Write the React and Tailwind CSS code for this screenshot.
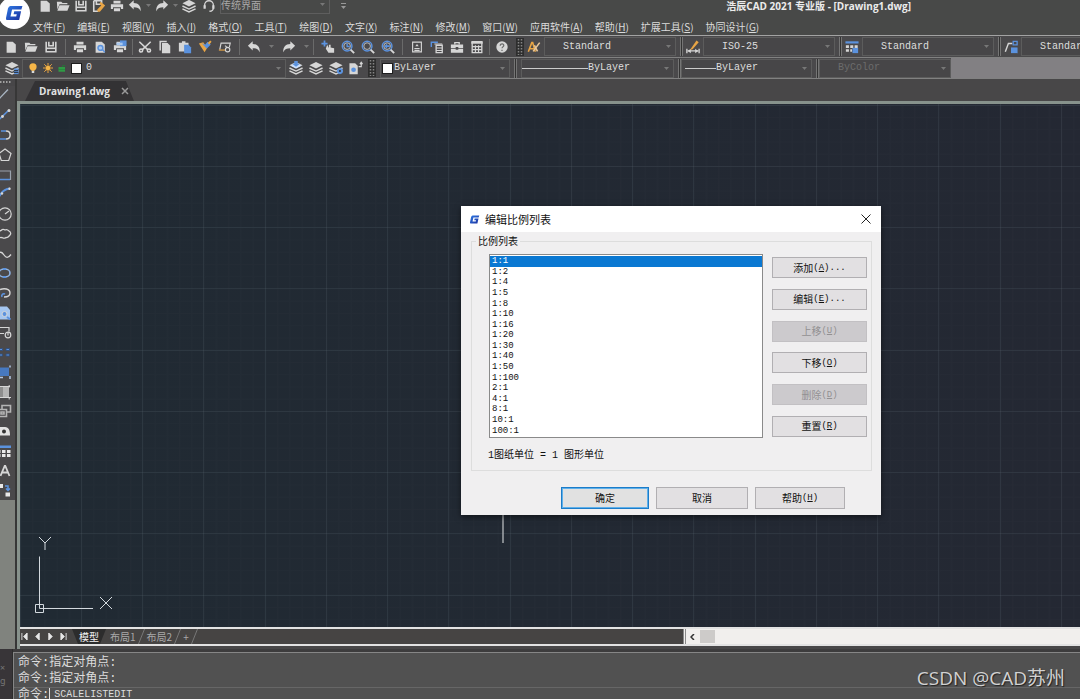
import React from "react";

const L = "#d6d6d6";
const B = "#5b92de";
const O = "#e8a545";

const page = <path d="M3 2h7l3.500 3v9.500H3z" fill={L} />;
const folder = (
  <g fill={L}>
    <path d="M1 3h5l1.500 1.500H13V6H4L1.500 12z" />
    <path d="M4 7H15.500l-2.500 6.500H1.500z" />
  </g>
);
const disk = (
  <g fill="none" stroke={L} strokeWidth="1.800">
    <path d="M2.500 2v11.500h11V2" />
    <path d="M5.500 2v4.500h5V2" />
    <path d="M2.500 9.500h11" />
  </g>
);
const printer = (
  <g fill={L}>
    <path d="M4 2h8v3H4zM1 6h14v5.500h-2.500V9.500h-9v2H1zM4.500 10.500h7V14h-7z" />
  </g>
);
const undo = (
  <path d="M1 6.500 6.500 1.500v3c5.500 0 8.500 3.500 8 9.500-1.500-3.500-4-4.500-8-4.500v2.500z" fill={L} />
);
const redo = (
  <path d="M15 6.500 9.500 1.500v3c-5.500 0-8.500 3.500-8 9.500 1.500-3.500 4-4.500 8-4.500v2.500z" fill={L} />
);
const layers = (
  <g>
    <path d="M8 1 15.500 4.800 8 8.500 .5 4.800z" fill={L} />
    <path d="M.5 8L8 11.500 15.500 8M.5 11.200L8 14.800l7.500-3.600" fill="none" stroke={L} strokeWidth="1.600" />
  </g>
);
const magnifier = (
  <g fill="none">
    <circle cx="7" cy="7" r="5.500" stroke={B} strokeWidth="1.700" />
    <circle cx="7" cy="7" r="3.800" stroke={L} strokeWidth="0.900" />
    <path d="M11 11l4 4" stroke={L} strokeWidth="2.200" />
  </g>
);

const ART = {
  page,
  folder,
  disk,
  printer,
  undo,
  redo,
  layers,
  saveAs: (
    <g>
      <path d="M2 2h9v3M2 2v12h5M5 2v4h5" fill="none" stroke={L} strokeWidth="1.800" />
      <path d="M10 3l5 4.500-6 7H6.500l-.5-2.500 4.500-4.500-2-2z" fill={O} />
    </g>
  ),
  headset: (
    <g fill="none" stroke={L} strokeWidth="1.500">
      <path d="M3 10V7a5 5 0 0 1 10 0v3c0 3-2 4-4.500 4" />
      <path d="M3 7v4M13 7v4" strokeWidth="2.500" />
    </g>
  ),
  preview: (
    <g>
      {page}
      <circle cx="8.500" cy="9" r="2.800" fill="#a8c8f0" stroke={B} strokeWidth="1.700" />
      <path d="M11 11l2.500 3" stroke={B} strokeWidth="1.700" />
    </g>
  ),
  plot: (
    <g>
      {printer}
      <path d="M8 .5h7.500v6.500H8z" fill={B} />
      <path d="M4 3h7v3H4z" fill="#a8c8f0" />
    </g>
  ),
  cut: (
    <g fill="none" stroke={L} strokeWidth="1.800">
      <path d="M1.500 2l9.500 9M14.500 2L5 11" />
      <circle cx="3.500" cy="12" r="1.800" />
      <circle cx="12.500" cy="12" r="1.800" />
    </g>
  ),
  copy: (
    <g>
      <path d="M2.500 12V1.800H10" fill="none" stroke={L} strokeWidth="1.700" />
      <path d="M4.500 3.500h6.500l3 3v8.500H4.500z" fill={L} />
    </g>
  ),
  paste: (
    <g>
      <path d="M1 3h3.500V1.500h4V3H12v10H1z" fill={L} />
      <path d="M7 5.500h5l3 3V15H7z" fill={B} />
    </g>
  ),
  brush: (
    <g>
      <path d="M1 4l5-1.500L10.500 9l-3 5z" fill={O} />
      <path d="M4 3.500l6 6.500L14.500 5 11 2 8 5.500z" fill={B} />
      <path d="M11 3.500L14 .5l1.500 1.500-2.500 3z" fill={O} />
    </g>
  ),
  lasso: (
    <g fill="none" stroke={L} strokeWidth="1.300">
      <path d="M2 11l1.500-7.500H14L13 8" />
      <path d="M1 11.500h7" stroke={O} />
      <circle cx="11" cy="11" r="2.500" />
      <path d="M11 9l-3-2.500" />
    </g>
  ),
  pan: (
    <g>
      <path d="M4 .5v7M.5 4h7" stroke={B} strokeWidth="2" />
      <path d="M7 5.500l2 3.500V5.500h2V8.500l4 1v5H8.500L5.500 10z" fill={L} />
    </g>
  ),
  zoomLive: (
    <g fill="none">
      {magnifier}
      <path d="M7 4v3.500h3" stroke={B} strokeWidth="1.600" />
    </g>
  ),
  zoomWin: magnifier,
  zoomPrev: (
    <g>
      {magnifier}
      <path d="M3.500 7l3.500-3v2h3v2H7v2z" fill={B} />
    </g>
  ),
  props: (
    <g>
      <path d="M3 2.500h10v11H3z" fill="none" stroke={L} strokeWidth="1.300" />
      <path d="M8 4.500l2 2.500H6zM5 9h6v1.500H5zM5 11.500h6v1H5z" fill={L} />
    </g>
  ),
  center: (
    <g>
      <path d="M1.500 8V2.500H9" fill="none" stroke={B} strokeWidth="1.600" />
      <path d="M7 6h7v8.500H7z" fill="none" stroke={L} strokeWidth="1.500" />
      <path d="M7 8.500h7v1.300H7zM7 11.500h7v1H7zM5 4h9v1.200H5z" fill={L} />
    </g>
  ),
  toolbox: (
    <g>
      <path d="M5.500 5V3h5v2" fill="none" stroke={L} strokeWidth="1.500" />
      <path d="M1 5h14v4H9.500V8h-3v1H1zM1 10h5.500v1h3v-1H15v4.500H1z" fill={L} />
    </g>
  ),
  calc: (
    <g fill="none" stroke={L} strokeWidth="1.500">
      <path d="M2.500 2h11v12.500h-11z" />
      <path d="M1.500 3h13" strokeWidth="2.500" />
      <path d="M2.500 7.500h11M2.500 11h11M6.200 6v8M9.800 6v8" strokeWidth="1.300" />
    </g>
  ),
  help: (
    <g>
      <circle cx="8" cy="8" r="6.500" fill={L} />
      <path d="M6 6.500c0-3 4.500-2.500 4 0-.2 1.300-2 1.500-2 3M8 11v1.500" fill="none" stroke="#6a6a6a" strokeWidth="1.400" />
    </g>
  ),
  textStyle: (
    <g fill="none">
      <path d="M1.500 13.500L5.500 3h1l3 10.500M3 10h6" stroke={O} strokeWidth="1.800" />
      <path d="M7 13l7.500-10M12 13l-3.500-7" stroke="#e9c79a" strokeWidth="1.800" />
    </g>
  ),
  dimStyle: (
    <g>
      <path d="M1 10v5M15 10v5M2 12.500h12" stroke={L} strokeWidth="1.500" />
      <path d="M2 12.500l3.500-2.500v5zM14 12.500L10.500 10v5z" fill={L} />
      <path d="M5.500 10l6.500-9.500 2.500 2-7 8-2.500 1z" fill={O} />
    </g>
  ),
  tableStyle: (
    <g>
      <path d="M.5 1.500h15V4H.5z" fill={B} />
      <path d="M1 6h3.500v3H1zM6 6h3.500v3H6zM11 6h3.500v3H11zM1 10.500h3.500v3H1zM6 10.500h2v3H6z" fill={L} />
      <path d="M8.500 9H15v6H8.500z" fill={B} />
    </g>
  ),
  leaderStyle: (
    <g>
      <path d="M1.500 13.500L5 4h4.500" fill="none" stroke={L} strokeWidth="1.600" />
      <path d="M10.500 1.500H15v4h-4.500z" fill="none" stroke={B} strokeWidth="1.500" />
      <path d="M8 8.500h7.500V15H8z" fill={B} />
    </g>
  ),
  layerMgr: (
    <g>
      {layers}
      <path d="M10.500 8.500h5V15h-5z" fill={B} />
      <path d="M10 11h5M10 13h5" stroke="#222" />
    </g>
  ),
  layerTop: (
    <g>
      {layers}
      <path d="M8 2.500l6 3-6 3-6-3z" fill="#c9e0ff" />
      <path d="M6 0h4v3h2.500L8 6.500 3.500 3H6z" fill={B} />
    </g>
  ),
  layerIso: (
    <g>
      {layers}
      <circle cx="12.500" cy="11.500" r="3.500" fill={B} />
      <circle cx="12.500" cy="11.500" r="1.200" fill="#333" />
    </g>
  ),
  layerDoc: (
    <g>
      <path d="M.5 2.500h6.500l3 3V15H.5z" fill={L} />
      <circle cx="5.200" cy="10" r="2.700" fill={B} />
      <path d="M11 6.500h3V2M12.500 3.500L14 1.500l1.500 2" fill="none" stroke={L} strokeWidth="1.300" />
    </g>
  ),
  bulb: (
    <g>
      <circle cx="8" cy="6" r="5.800" fill="#f5b548" />
      <path d="M5.500 10h5v2.500h-5z" fill="#f5b548" />
      <path d="M6 12.500h4V16H6z" fill="#d8d8d8" />
    </g>
  ),
  sun: (
    <g>
      <path d="M8 0v16M0 8h16M2 2l12 12M14 2L2 14" stroke="#e8a545" strokeWidth="1.600" />
      <circle cx="8" cy="8" r="4.500" fill="#f5b548" stroke="#6b5233" />
    </g>
  ),
  lock: (
    <g>
      <path d="M1 6h13v9.500H1z" fill="#2f9a45" />
      <path d="M9 6V3h5v2" fill="none" stroke="#2a6e38" strokeWidth="2" />
      <path d="M1 11h13" stroke="#1f7a35" />
    </g>
  ),
  line: <path d="M0 14L12 1.500" stroke="#a9b6c4" strokeWidth="1.300" />,
  ray: (
    <g>
      <path d="M0 14.500L13 2" stroke={B} strokeWidth="1.600" />
      <circle cx="13" cy="2.500" r="1.500" fill={L} />
      <circle cx="6.500" cy="8.500" r="1.400" fill={L} />
    </g>
  ),
  pline: (
    <g fill="none" strokeWidth="1.500">
      <path d="M2 12h8" stroke={B} />
      <path d="M10 12c5.500 0 5.500-8 0-8" stroke={L} />
      <path d="M10 4H5" stroke={B} />
    </g>
  ),
  polygon: <path d="M9 2l6 4.500-2.300 7H5.300L3 6.500z" fill="none" stroke={L} strokeWidth="1.200" />,
  rect: (
    <g fill="none">
      <path d="M1 4h13.500v8.500H1z" stroke="#9aa2ad" strokeWidth="1.200" />
      <path d="M1 12.500h13" stroke={B} strokeWidth="1.500" />
    </g>
  ),
  arc: (
    <g>
      <path d="M2 14C4 7 8 3 14 2.500" fill="none" stroke={B} strokeWidth="1.800" />
      <circle cx="13.500" cy="2.800" r="1.200" fill={L} />
      <circle cx="6" cy="7.500" r="1.200" fill={L} />
    </g>
  ),
  circle: (
    <g fill="none" stroke={L} strokeWidth="1.200">
      <circle cx="9" cy="8" r="6.200" />
      <path d="M9 8l4-3" />
    </g>
  ),
  cloud: (
    <path d="M5 4.500c2-2 3-1 4-.5 2-1 3 0 4 1 2 1 2 3 1 4s-2 3-4 2.500c-2 1.500-3 .5-4 0-2 .5-3-.5-3-2.500-2-1-1-4 2-4.500z" fill="none" stroke={L} strokeWidth="1.300" />
  ),
  spline: <path d="M1 9.500c3-5 5-3.500 7-.5s4 3.500 7-.5" fill="none" stroke={L} strokeWidth="1.300" />,
  ellipse: (
    <g>
      <ellipse cx="8.500" cy="8" rx="5.500" ry="4" fill="none" stroke="#8fb2e0" strokeWidth="1.600" />
      <path d="M7 4h3M7 12h3" stroke={B} strokeWidth="2" />
    </g>
  ),
  ellipseArc: (
    <g fill="none">
      <path d="M4 4.500c4-1.500 10-1 10 3.500 0 3-3 4-6 4" stroke={L} strokeWidth="1.400" />
      <path d="M6 12c-1-2 1-4 3-3" stroke={B} strokeWidth="1.600" />
    </g>
  ),
  block: (
    <g>
      <path d="M4 1.500h7l3 3.500v9.500H4z" fill="#a5c6f0" />
      <circle cx="8.500" cy="9" r="2.500" fill={B} stroke={L} />
      <path d="M11 12l3.500 2.500" stroke={B} strokeWidth="2" />
    </g>
  ),
  makeBlock: (
    <g fill="none" stroke={L} strokeWidth="1.200">
      <path d="M3 3.500h10v4M3 9.500h5" />
      <circle cx="12" cy="11" r="2.800" />
      <path d="M12 8v3.500" />
    </g>
  ),
  point: <path d="M3 4.500h3.500v2H3zM10 4.500h3.500v2H10zM3 10h3.500v2H3zM10 10h3.500v2H10z" fill={B} stroke="#33507c" />,
  hatch: (
    <g>
      <path d="M4 3.500h9V12H4z" fill="#4779c0" />
      <path d="M1 13.500h6M14 1.500v2M14 12v3" stroke="#b4c9e6" strokeWidth="1.500" />
    </g>
  ),
  gradient: (
    <g>
      <path d="M3 3h6v10.500H3z" fill="#8d8d8d" />
      <path d="M7 3h6v10.500H7z" fill="#b4b4b4" />
      <path d="M13.200 1v2.500M13.200 13v2.500M2 2.500h12M2 13.500h13" stroke={L} />
    </g>
  ),
  region: (
    <g fill="none" stroke="#b4b4b4" strokeWidth="1.600">
      <path d="M6 6V2.500h8.500V9H11" />
      <path d="M2 6.500h8.500v7H2z" />
      <path d="M5 9h3v2H5z" />
    </g>
  ),
  wipeout: (
    <g>
      <path d="M2 4h7c4 0 5 4 5 8.500H2z" fill="#e2e2e2" />
      <circle cx="8" cy="8.500" r="2" fill="#333" />
    </g>
  ),
  table: (
    <g>
      <path d="M1 2.500h14V5H1z" fill={B} />
      <path d="M1 7h3.500v3H1zM6 7h3.500v3H6zM11 7h3.500v3H11zM1 11h3.500v3H1zM6 11h3.500v3H6zM11 11h3.500v3H11z" fill="#e8e8e8" />
    </g>
  ),
  mtext: <path d="M4.500 13L8.700 3h.6l4.200 10M6 9.500h6" fill="none" stroke={L} strokeWidth="1.800" />,
  addSel: (
    <g>
      <path d="M3 2h4v4H3zM9.500 10.500H14v4H9.500z" fill="#e8e8e8" />
      <path d="M9 4h3v4.500M10 6.500l2 2 2-2" fill="none" stroke={B} strokeWidth="1.500" />
    </g>
  ),
};

function Art({ name, className }) {
  return (
    <svg viewBox="0 0 16 16" className={className} aria-hidden="true">
      {ART[name]}
    </svg>
  );
}

function Tool({ name, label, width = "w-5" }) {
  return (
    <button type="button" aria-label={label} className={"flex h-full shrink-0 items-center justify-center " + width}>
      <Art name={name} className="size-[14px] shrink-0" />
    </button>
  );
}

const Caret = () => (
  <svg viewBox="0 0 5 3" className="h-[3px] w-[5px] shrink-0 fill-[#777777]" aria-hidden="true">
    <path d="M0 0h5L2.500 3z" />
  </svg>
);

const Sep = () => <span className="mx-[2px] h-4 w-px shrink-0 bg-[#6a6a6a]" />;
const WideSep = () => <span className="mx-1 h-4 w-px shrink-0 bg-[#6a6a6a]" />;

const Grip = () => (
  <svg viewBox="0 0 8 18" className="h-[18px] w-2 shrink-0 bg-[#2e2e2e]" aria-hidden="true">
    <path d="M2.500 1v16M5.500 1v16" stroke="#858585" strokeWidth="1.500" strokeDasharray="1.500 1.500" />
  </svg>
);

function Combo({ label, value, className, lead, disabled }) {
  return (
    <div className={"flex h-[19px] shrink-0 items-center border border-[#5c5c5c] bg-[#474648] pr-1 " + className}>
      {lead}
      <select
        aria-label={label}
        disabled={disabled}
        className="h-full min-w-0 flex-1 appearance-none bg-transparent font-['Liberation_Mono','Noto_Sans_CJK_SC',monospace] text-[10px] leading-4 text-[#dedede] outline-none disabled:text-[#6c6c6c] disabled:opacity-100"
      >
        <option>{value}</option>
      </select>
      <Caret />
    </div>
  );
}

const Divider = () => <span className="h-[19px] w-[3px] shrink-0 border-x border-[#757575] bg-[#333333]" />;
const Pad = () => <span className="w-[18px] shrink-0" />;
const Gap = () => <span className="w-1 shrink-0" />;

const MENUS = [
  ["文件", "F"], ["编辑", "E"], ["视图", "V"], ["插入", "I"], ["格式", "O"],
  ["工具", "T"], ["绘图", "D"], ["文字", "X"], ["标注", "N"], ["修改", "M"],
  ["窗口", "W"], ["应用软件", "A"], ["帮助", "H"], ["扩展工具", "S"], ["协同设计", "G"],
];

const DRAW = [
  ["line", "直线"], ["ray", "构造线"], ["pline", "多段线"], ["polygon", "多边形"],
  ["rect", "矩形"], ["arc", "圆弧"], ["circle", "圆"], ["cloud", "云线"],
  ["spline", "样条曲线"], ["ellipse", "椭圆"], ["ellipseArc", "椭圆弧"], ["block", "插入块"],
  ["makeBlock", "创建块"], ["point", "点"], ["hatch", "图案填充"], ["gradient", "渐变色"],
  ["region", "面域"], ["wipeout", "区域覆盖"], ["table", "表格"], ["mtext", "多行文字"],
  ["addSel", "添加选定对象"],
];

const SCALES = [
  "1:1", "1:2", "1:4", "1:5", "1:8", "1:10", "1:16", "1:20", "1:30",
  "1:40", "1:50", "1:100", "2:1", "4:1", "8:1", "10:1", "100:1",
];

function GMark({ className }) {
  return (
    <svg viewBox="0 0 20 18" className={className} aria-hidden="true">
      <defs>
        <linearGradient id="mark" x1="0" y1="0" x2="1" y2="1">
          <stop offset="0" stopColor="#2f7be6" />
          <stop offset="1" stopColor="#1b2f9c" />
        </linearGradient>
      </defs>
      <path
        d="M6 1h13.500l-1.200 4H7.800L6 13h6.500l.6-2.500H9.500l.8-3.500h7.700l-2.200 10H2.500Q.5 17 1 14.500L3.200 4Q4 1 6 1z"
        fill="url(#mark)"
      />
    </svg>
  );
}

function TopBars() {
  return (
    <header className="relative shrink-0 bg-[#484948] text-[#dcdcdc]">
      <div className="flex h-[17px] items-start overflow-hidden">
        <div className="flex h-[11px] items-center gap-[2px] pl-9">
          <div className="flex h-full">
            <Tool width="w-[18px]" name="page" label="新建" />
            <Tool width="w-[18px]" name="folder" label="打开" />
            <Tool width="w-[18px]" name="disk" label="保存" />
            <Tool width="w-[18px]" name="saveAs" label="另存为" />
            <Tool width="w-[18px]" name="printer" label="打印" />
            <Tool width="w-[18px]" name="undo" label="放弃" />
          </div>
          <Caret />
          <Tool width="w-[18px]" name="redo" label="重做" />
          <Caret />
          <Tool width="w-[18px]" name="layers" label="图层" />
          <Tool width="w-[18px]" name="headset" label="在线帮助" />
        </div>
        <div className="ml-[2px] flex h-[14px] w-[110px] items-center border-x border-b border-[#5e5e5e] pb-1 pr-1">
          <select aria-label="工作空间" className="min-w-0 flex-1 appearance-none bg-transparent font-['Noto_Sans_CJK_SC',sans-serif] text-[10px] leading-3 text-[#a8a8a8] outline-none">
            <option>传统界面</option>
          </select>
          <Caret />
        </div>
        <div className="flex h-[11px] w-[26px] items-center justify-center">
          <svg viewBox="0 0 5 6" className="h-[6px] w-[5px]" aria-hidden="true">
            <path d="M0 .5h5" stroke="#999999" />
            <path d="M0 3h5L2.500 6z" fill="#999999" />
          </svg>
        </div>
        <h1 className="ml-auto pr-[169px] font-['Open_Sans','Noto_Sans_CJK_SC',sans-serif] text-[10px] font-bold leading-3 text-[#ececec]">
          浩辰CAD 2021 专业版 - [Drawing1.dwg]
        </h1>
      </div>
      <nav className="flex h-[18px] items-center gap-3 pl-[33px] pt-[2px] font-['Noto_Sans_CJK_SC',sans-serif] text-[10px] leading-4">
        {MENUS.map(([name, key]) => (
          <button key={name} type="button" className="shrink-0">
            {name}(<u>{key}</u>)
          </button>
        ))}
      </nav>
      <div className="flex h-[22px] items-center overflow-hidden border-t border-[#a3a3a3] bg-[#4a494b] pl-px">
        <div className="flex h-full">
          <Tool name="page" label="新建" />
          <Tool name="folder" label="打开" />
          <Tool name="disk" label="保存" />
        </div>
        <WideSep />
        <div className="flex h-full">
          <Tool name="printer" label="打印" />
          <Tool name="preview" label="打印预览" />
          <Tool name="plot" label="发布" />
        </div>
        <Sep />
        <div className="flex h-full">
          <Tool name="cut" label="剪切" />
          <Tool name="copy" label="复制" />
          <Tool name="paste" label="粘贴" />
          <Tool name="brush" label="特性匹配" />
          <Tool name="lasso" label="块编辑器" />
        </div>
        <WideSep />
        <div className="flex h-full items-center gap-[5px]">
          <Tool name="undo" label="撤销" />
          <Caret />
          <Tool name="redo" label="恢复" />
          <Caret />
        </div>
        <WideSep />
        <div className="flex h-full">
          <Tool name="pan" label="实时平移" />
          <Tool name="zoomLive" label="实时缩放" />
          <Tool name="zoomWin" label="窗口缩放" />
          <Tool name="zoomPrev" label="上一视图" />
        </div>
        <WideSep />
        <div className="flex h-full">
          <Tool name="props" label="特性" />
          <Tool name="center" label="设计中心" />
          <Tool name="toolbox" label="工具选项板" />
          <Tool name="calc" label="计算器" />
        </div>
        <Sep />
        <Tool name="help" label="帮助" />
        <Gap />
        <Grip />
        <Tool name="textStyle" label="文字样式" />
        <Combo label="文字样式列表" value="Standard" className="w-[132px]" lead={<Pad />} />
        <Gap />
        <Divider />
        <Tool name="dimStyle" label="标注样式" />
        <Combo label="标注样式列表" value="ISO-25" className="w-[132px]" lead={<Pad />} />
        <Gap />
        <Divider />
        <Tool name="tableStyle" label="表格样式" />
        <Combo label="表格样式列表" value="Standard" className="w-[132px]" lead={<Pad />} />
        <Gap />
        <Divider />
        <Tool name="leaderStyle" label="多重引线样式" />
        <Combo label="多重引线样式列表" value="Standard" className="w-[132px]" lead={<Pad />} />
      </div>
      <div className="flex h-[22px] items-center overflow-hidden border-y border-[#818181] bg-[#4a494b]">
        <span className="w-[2px] shrink-0" />
        <Tool name="layerMgr" label="图层特性管理器" />
        <Combo
          label="图层"
          value="0"
          className="w-[264px]"
          lead={
            <span className="flex shrink-0 items-center gap-[5px] pl-[5px] pr-1">
              <Art name="bulb" className="size-[10px]" />
              <Art name="sun" className="size-[10px]" />
              <Art name="lock" className="size-2" />
              <span className="size-[11px] border border-[#1e1e1e] bg-white" />
            </span>
          }
        />
        <div className="flex h-full">
          <Tool name="layerTop" label="置为当前图层" />
          <Tool name="layers" label="上一图层" />
          <Tool name="layerIso" label="图层隔离" />
          <Tool name="layerDoc" label="图层状态" />
        </div>
        <span className="w-[2px] shrink-0" />
        <Grip />
        <Gap />
        <Combo label="颜色" value="ByLayer" className="w-[130px]" lead={<span className="mx-px size-[11px] border border-[#1e1e1e] bg-white" />} />
        <Gap />
        <Divider />
        <Gap />
        <Combo label="线型" value="ByLayer" className="w-[153px]" lead={<span className="h-px w-[66px] shrink-0 bg-[#cccccc]" />} />
        <Gap />
        <Divider />
        <Combo label="线宽" value="ByLayer" className="w-[131px]" lead={<span className="ml-[3px] h-px w-[31px] shrink-0 bg-[#cccccc]" />} />
        <Gap />
        <Divider />
        <Combo label="打印样式" value="ByColor" disabled className="w-[132px]" lead={<Pad />} />
        <span className="h-full flex-1 bg-[#828083]" />
      </div>
      <div className="absolute -left-[2px] -top-[3px] flex size-8 items-center justify-center rounded-full bg-white">
        <GMark className="h-[16px] w-[18px]" />
      </div>
    </header>
  );
}

function DrawBar() {
  return (
    <aside className="flex w-[17px] shrink-0 flex-col overflow-hidden border-r-2 border-[#373737] bg-[#80837e]">
      <div className="h-[7px] bg-[#474648] pt-px">
        <svg viewBox="0 0 12 4" className="h-1 w-3" aria-hidden="true">
          <path d="M0 2h12" stroke="#a0a0a0" strokeWidth="2" strokeDasharray="1.500 1.500" />
        </svg>
      </div>
      <div className="flex h-[414px] flex-col bg-[#4a494b]">
        {DRAW.map(([name, label]) => (
          <button key={name} type="button" aria-label={label} className="-ml-1 flex w-4 flex-1 items-center">
            <Art name={name} className="size-4" />
          </button>
        ))}
      </div>
    </aside>
  );
}

function Canvas() {
  return (
    <div className="relative min-h-0 flex-1 bg-linear-to-r from-[#202a33] to-[#242833]">
      <svg className="absolute inset-0 h-full w-full" aria-hidden="true">
        <defs>
          <pattern id="minor" x="61" y="62" width="12.250" height="12.250" patternUnits="userSpaceOnUse">
            <path d="M0 .5H12.250M.5 0V12.250" stroke="#ffffff" strokeOpacity="0.01" />
          </pattern>
          <pattern id="major" x="61" y="62" width="245" height="245" patternUnits="userSpaceOnUse">
            <path
              d="M0 .5H245M0 61.500H245M0 122.500H245M0 184.500H245M.5 0V245M61.500 0V245M122.500 0V245M184.500 0V245"
              stroke="#8ea0ab"
              strokeOpacity="0.1"
            />
          </pattern>
        </defs>
        <rect width="100%" height="100%" fill="url(#minor)" />
        <rect width="100%" height="100%" fill="url(#major)" />
        <path d="M483 410V439" stroke="#a4a8ac" strokeWidth="1.500" />
      </svg>
      <svg viewBox="0 0 80 80" className="absolute bottom-[13px] left-[14px] size-20" fill="none" stroke="#d3d9de" aria-label="UCS">
        <path d="M5.500 22.500V74.500H59M1.500 70.500h8v8h-8z" />
        <path d="M5 3l6 6 6-6M11 9v7M66 63l12 12M78 63l-12 12" />
      </svg>
    </div>
  );
}

const Slash = () => (
  <svg viewBox="0 0 11 15" className="h-full w-[11px] shrink-0" aria-hidden="true">
    <path d="M8.500 0L2.500 15" stroke="#777777" />
  </svg>
);

function LayoutTabs() {
  return (
    <div className="flex h-[19px] shrink-0 items-center border-y-2 border-[#e2e2e2] bg-[#464443]">
      <div className="flex h-full basis-[62.5%] items-center overflow-hidden font-['Noto_Sans_CJK_SC',sans-serif] text-[10px] leading-[15px] text-[#a9a9a9]">
        {[
          ["第一个", "M1 0v8M7 0L3 4l4 4z"],
          ["上一个", "M6 0L2 4l4 4z"],
          ["下一个", "M2 0l4 4-4 4z"],
          ["最后一个", "M7 0v8M1 0l4 4-4 4z"],
        ].map(([label, d]) => (
          <button key={label} type="button" aria-label={label} className="flex w-[13px] shrink-0 items-center pl-px">
            <svg viewBox="0 0 8 8" className="size-[7px] fill-[#e8e8e8] stroke-[#e8e8e8]">
              <path d={d} />
            </svg>
          </button>
        ))}
        <button type="button" className="h-full bg-[#2c2c2c] px-[7px] text-[#f2f2f2] [clip-path:polygon(0_0,100%_0,calc(100%-6px)_100%,6px_100%)]">
          模型
        </button>
        <button type="button" className="ml-1">布局1</button>
        <Slash />
        <button type="button">布局2</button>
        <Slash />
        <button type="button" aria-label="新建布局">+</button>
        <Slash />
      </div>
      <div className="flex h-full flex-1 items-center border-l-[3px] border-double border-[#8a8a8a] bg-[#f1efed]">
        <button type="button" aria-label="向左滚动" className="flex h-full w-[14px] items-center justify-center">
          <svg viewBox="0 0 5 6" className="h-[6px] w-[5px]" fill="none" stroke="#333333" strokeWidth="1.500">
            <path d="M4 0L1 3l3 3" />
          </svg>
        </button>
        <span className="h-[13px] w-[15px] bg-[#cdcbc9]" />
      </div>
    </div>
  );
}

function Command() {
  return (
    <footer className="flex h-[50px] shrink-0 bg-[#3d3c3d]">
      <div className="flex w-[13px] shrink-0 flex-col justify-center gap-1 border-r border-[#2c2c2c] bg-[#383538] text-[9px] leading-[9px] text-[#777777]">
        <span>×</span>
        <span>g</span>
      </div>
      <div className="relative mt-[3px] flex-1 overflow-hidden border-l border-t border-[#868686] bg-[#515151] pl-1 pt-[2px] font-['Liberation_Mono','Noto_Sans_CJK_SC',monospace] text-[12px] leading-4 text-[#dddddd]">
        <p>命令:指定对角点:</p>
        <p>命令:指定对角点:</p>
        <label className="-ml-1 flex h-[14px] items-start border-t border-[#666666] pl-1 leading-[14px]">
          命令:
          <input
            defaultValue="SCALELISTEDIT"
            className="h-[14px] min-w-0 flex-1 border-l border-[#dddddd] bg-transparent pl-1 text-[10px] leading-[14px] outline-none"
          />
        </label>
        <p className="absolute right-[15px] top-[11px] font-['Open_Sans','Noto_Sans_CJK_SC',sans-serif] text-[19px] leading-7 text-[#d2d2d2] [text-shadow:1px_1px_1px_#222222]">
          CSDN @CAD苏州
        </p>
      </div>
    </footer>
  );
}

function DialogButton({ text, hotkey, tail, disabled, primary, className }) {
  return (
    <button
      type="button"
      disabled={disabled}
      className={
        "flex items-center justify-center border font-['Noto_Sans_CJK_SC',sans-serif] text-[10px] leading-4 text-[#111111] disabled:border-[#c2c0c3] disabled:bg-[#cccacd] disabled:text-[#929092] " +
        (primary ? "border-[#1c7cc9] bg-[#e1e1e1] ring-1 ring-inset ring-[#5fb0ea] " : "border-[#b1afb2] bg-[#e2e0e2] ") +
        className
      }
    >
      {text}
      {hotkey && (
        <span className="font-['Liberation_Mono',monospace] text-[9px]">
          (<u>{hotkey}</u>){tail}
        </span>
      )}
    </button>
  );
}

function ScaleDialog() {
  return (
    <section
      role="dialog"
      aria-labelledby="dialog-title"
      className="absolute left-[461px] top-[206px] w-[420px] bg-[#f0eff0] pb-[6px] font-['Noto_Sans_CJK_SC',sans-serif] text-[#111111] shadow-[0_2px_6px_rgba(0,0,0,0.5)]"
    >
      <div className="flex h-[26px] items-center bg-white pl-2 pr-[10px]">
        <GMark className="h-[9px] w-[11px]" />
        <h2 id="dialog-title" className="pl-[5px] text-[11px] leading-4">编辑比例列表</h2>
        <button type="button" aria-label="关闭" className="ml-auto">
          <svg viewBox="0 0 10 10" className="size-[10px]" stroke="#222222">
            <path d="M.5.5l9 9M9.500.5l-9 9" />
          </svg>
        </button>
      </div>
      <fieldset className="ml-[10px] mr-[9px] mt-px border border-[#dddddd] pb-[6px] pl-4 pr-1">
        <legend className="-ml-3 px-[2px] text-[10px] leading-4">比例列表</legend>
        <div className="flex gap-[9px] pl-px pt-[5px]">
          <select
            size={17}
            defaultValue="1:1"
            aria-label="比例列表"
            className="h-[184px] min-w-0 flex-1 appearance-none overflow-hidden border border-[#8a8a8a] bg-white py-px font-['Liberation_Mono',monospace] text-[9px] outline-none"
          >
            {SCALES.map((s) => (
              <option
                key={s}
                className="flex h-[calc(100%/17)] min-h-0 items-center px-[2px] py-0 leading-none text-[#111111] checked:bg-linear-to-r checked:from-[#0a78d2] checked:to-[#0a78d2] checked:text-white"
              >
                {s}
              </option>
            ))}
          </select>
          <div className="flex w-[95px] flex-col justify-between pb-px pt-[3px]">
            <DialogButton text="添加" hotkey="A" tail="..." className="h-[21px]" />
            <DialogButton text="编辑" hotkey="E" tail="..." className="h-[21px]" />
            <DialogButton text="上移" hotkey="U" disabled className="h-[21px]" />
            <DialogButton text="下移" hotkey="O" className="h-[21px]" />
            <DialogButton text="删除" hotkey="D" disabled className="h-[21px]" />
            <DialogButton text="重置" hotkey="R" className="h-[21px]" />
          </div>
        </div>
        <p className="pt-[10px] font-['Liberation_Mono','Noto_Sans_CJK_SC',monospace] text-[10px] leading-4">
          1图纸单位 = 1 图形单位
        </p>
      </fieldset>
      <div className="flex justify-end gap-[7px] pr-9 pt-4">
        <DialogButton text="确定" primary className="h-[22px] w-[88px]" />
        <DialogButton text="取消" className="h-[22px] w-[92px]" />
        <DialogButton text="帮助" hotkey="H" className="h-[22px] w-[90px]" />
      </div>
    </section>
  );
}

export default function App() {
  return (
    <div className="relative flex h-screen flex-col overflow-hidden bg-[#484748]">
      <TopBars />
      <main className="flex min-h-0 flex-1">
        <DrawBar />
        <div className="flex min-w-0 flex-1 flex-col">
          <div className="flex h-[22px] shrink-0 items-end pl-2">
            <div className="flex h-[20px] items-center gap-[11px] bg-[#333234] pl-[14px] pr-[5px] font-['Open_Sans','Noto_Sans_CJK_SC',sans-serif] text-[10px] font-bold leading-4 text-[#e2e2e2] [clip-path:polygon(10px_0,calc(100%-8px)_0,100%_100%,0_100%)]">
              Drawing1.dwg
              <button type="button" aria-label="关闭图纸">
                <svg viewBox="0 0 8 8" className="size-2" stroke="#999999" strokeWidth="1.500">
                  <path d="M1 1l6 6M7 1L1 7" />
                </svg>
              </button>
            </div>
          </div>
          <div className="flex min-h-0 flex-1 flex-col border-l-[3px] border-t-[3px] border-[#87928c] pb-[3px]">
            <Canvas />
            <LayoutTabs />
          </div>
        </div>
      </main>
      <Command />
      <ScaleDialog />
    </div>
  );
}
